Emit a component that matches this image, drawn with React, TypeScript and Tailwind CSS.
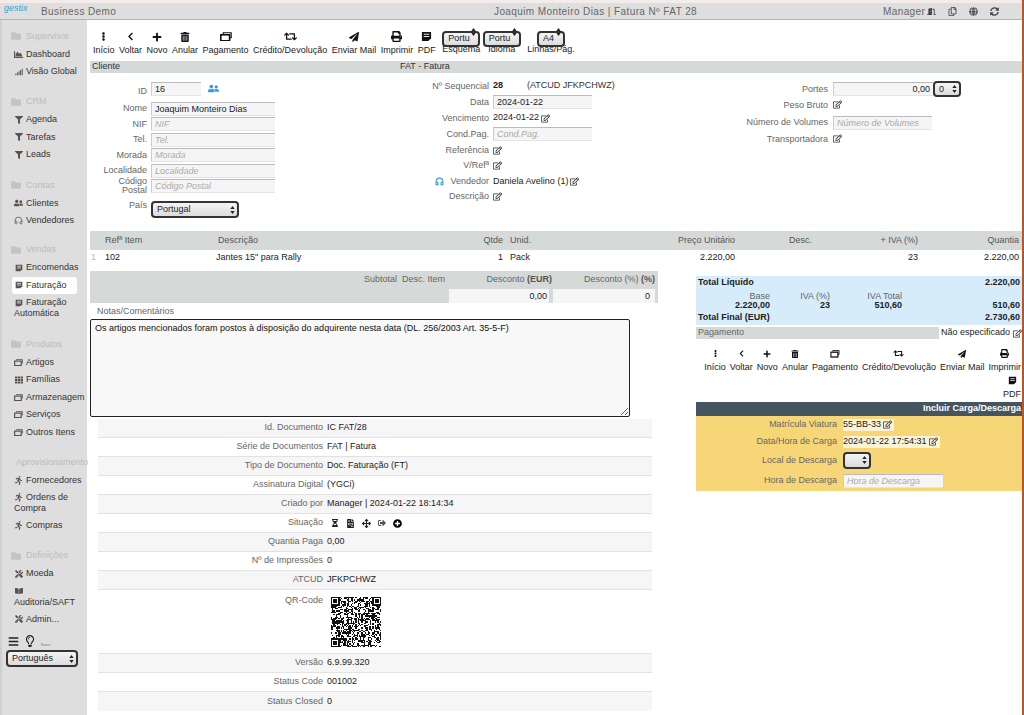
import React from "react";
import {
  FaEllipsisV, FaChevronLeft, FaPlus, FaTrashAlt, FaRetweet, FaPaperPlane, FaPrint, FaFolder, FaFilter, FaUserFriends,
  FaTh, FaRunning, FaTools, FaRegLightbulb, FaHourglassHalf, FaFileInvoice, FaArrowsAlt, FaSignOutAlt, FaPlusCircle,
  FaRegEdit, FaSignal, FaChartArea, FaBars, FaRegCopy, FaGlobe, FaSyncAlt, FaDoorOpen, FaBookOpen,
} from "react-icons/fa";
import { Headphones } from "lucide-react";

const Bills = ({ s = 12 }: { s?: number }) => (
  <svg width={s} height={s * 0.8} viewBox="0 0 15 12" fill="none" stroke="currentColor">
    <path d="M4 2.5V1h10v6h-1.5" strokeWidth="1.4" />
    <rect x="1" y="3.5" width="11" height="7.5" strokeWidth="2" />
  </svg>
);
const Notes = ({ s = 11 }: { s?: number }) => (
  <svg width={s} height={s} viewBox="0 0 12 12" fill="currentColor">
    <path d="M1 1h10v7l-3 3H1z" />
    <path d="M3 3.5h6M3 6h6" stroke="#fff" strokeWidth="1" />
  </svg>
);

const Caret = () => (
  <svg width="5" height="9" viewBox="0 0 5 9" fill="#222" className="absolute right-[4px] top-1/2 -translate-y-1/2 pointer-events-none">
    <path d="M2.5 0.5L4.7 3.6H0.3zM2.5 8.5L0.3 5.4h4.4z" />
  </svg>
);

const Sel = ({ value, cls }: { value: string; cls: string }) => (
  <div className={`relative ${cls}`}>
    <select
      defaultValue={value}
      className="appearance-none w-full h-full rounded-[4px] border-2 border-[#333] bg-gradient-to-b from-[#f4f4f4] to-[#dcdcdc] pl-[4px] text-[9px] leading-none text-[#222] outline-none"
    >
      <option>{value}</option>
    </select>
    <Caret />
  </div>
);

const Tool = ({ icon, label, w }: { icon: React.ReactNode; label: string; w?: string }) => (
  <div className={`flex flex-col items-center ${w ?? ""}`}>
    <div className="h-[13px] flex items-center justify-center text-[#111]">{icon}</div>
    <span className="text-[9px] leading-[13px] mt-px text-[#222] whitespace-nowrap">{label}</span>
  </div>
);

const tools: [React.ReactNode, string][] = [
  [<FaEllipsisV size={9} />, "Início"],
  [<FaChevronLeft size={9} />, "Voltar"],
  [<FaPlus size={10} />, "Novo"],
  [<FaTrashAlt size={10} />, "Anular"],
  [<Bills />, "Pagamento"],
  [<FaRetweet size={13} />, "Crédito/Devolução"],
  [<FaPaperPlane size={10} />, "Enviar Mail"],
  [<FaPrint size={11} />, "Imprimir"],
  [<Notes />, "PDF"],
];

const Item = ({ icon, children, active }: { icon: React.ReactNode; children: React.ReactNode; active?: boolean }) => (
  <div className={`h-[17.5px] leading-[17.5px] flex items-center gap-[3px] pl-[12px] ${active ? "bg-white rounded-[3px] mx-[10px] !pl-[2px]" : ""}`}>
    <span className="w-[9px] flex justify-center text-[#555] shrink-0">{icon}</span>
    <span className="whitespace-nowrap">{children}</span>
  </div>
);
const TwoLine = ({ icon, a, b }: { icon: React.ReactNode; a?: string; b: string }) => (
  <div className="leading-[11px] py-[3px] pl-[12px]">
    <div className="flex items-center gap-[3px] h-[11px]">
      <span className="w-[9px] flex justify-center text-[#555]">{icon}</span>
      {a && <span>{a}</span>}
    </div>
    <div>{b}</div>
  </div>
);
const Head = ({ children, mt }: { children: string; mt: string }) => (
  <div className={`h-[18.5px] flex items-center gap-[5px] pl-[9px] text-[#bcbcbc] whitespace-nowrap ${mt}`}>
    <FaFolder size={10} className="text-[#c4c4c4]" />
    <span>{children}</span>
  </div>
);

const Sidebar = () => (
  <aside className="w-[87px] shrink-0 bg-[#dedede] text-[9px] text-[#333] pt-[7px] border-l-2 border-[#cfcfcf] -ml-0 relative z-10">
    <Head mt="">Supervisor</Head>
    <Item icon={<FaChartArea size={9} />}>Dashboard</Item>
    <Item icon={<FaSignal size={8} />}>Visão Global</Item>
    <Head mt="mt-[12px]">CRM</Head>
    <Item icon={<FaFilter size={8} />}>Agenda</Item>
    <Item icon={<FaFilter size={8} />}>Tarefas</Item>
    <Item icon={<FaFilter size={8} />}>Leads</Item>
    <Head mt="mt-[12.5px]">Contas</Head>
    <Item icon={<FaUserFriends size={10} />}>Clientes</Item>
    <Item icon={<Headphones size={9} />}>Vendedores</Item>
    <Head mt="mt-[11px]">Vendas</Head>
    <Item icon={<Notes s={8} />}>Encomendas</Item>
    <Item active icon={<Notes s={8} />}>Faturação</Item>
    <TwoLine icon={<Notes s={8} />} a="Faturação" b="Automática" />
    <Head mt="mt-[13px]">Produtos</Head>
    <Item icon={<Bills s={9} />}>Artigos</Item>
    <Item icon={<FaTh size={8} />}>Famílias</Item>
    <Item icon={<Bills s={9} />}>Armazenagem</Item>
    <Item icon={<Bills s={9} />}>Serviços</Item>
    <Item icon={<Bills s={9} />}>Outros Itens</Item>
    <Head mt="mt-[12px]">Aprovisionamento</Head>
    <Item icon={<FaRunning size={9} />}>Fornecedores</Item>
    <TwoLine icon={<FaRunning size={9} />} a="Ordens de" b="Compra" />
    <Item icon={<FaRunning size={9} />}>Compras</Item>
    <Head mt="mt-[12px]">Definições</Head>
    <Item icon={<FaTools size={8} />}>Moeda</Item>
    <TwoLine icon={<FaBookOpen size={8} />} b="Auditoria/SAFT" />
    <Item icon={<FaTools size={8} />}>Admin...</Item>
    <div className="h-[18px] mt-[4px] flex items-center gap-[5px] pl-[6px] text-[#222]">
      <FaBars size={11} />
      <FaRegLightbulb size={12} />
      <span className="text-[3px] text-[#777] mt-[8px]">Branco</span>
    </div>
    <Sel value="Português" cls="w-[72px] h-[17px] ml-[4px]" />
  </aside>
);

const inputCls =
  "h-full w-full bg-[#f5f5f5] border-t border-l border-t-[#bbb] border-l-[#ccc] border-b border-b-[#e4e4e4] px-[3px] text-[9px] text-[#222] placeholder:italic placeholder:text-[#aaa] outline-none";

const In = ({ ph, val, cls }: { ph?: string; val?: string; cls: string }) => (
  <div className={cls}>
    <input readOnly placeholder={ph} defaultValue={val} className={inputCls} />
  </div>
);
const Edit = () => <FaRegEdit size={9} className="text-[#333] shrink-0" />;
const EditChip = ({ children }: { children?: React.ReactNode }) => (
  <span className="inline-flex items-center gap-[2px] bg-white/70 h-[12px] pr-[2px] whitespace-nowrap text-[#222]">
    {children}
    <Edit />
  </span>
);

const Row = ({ label, w, h, children, top }: { label: React.ReactNode; w: string; h: string; children?: React.ReactNode; top?: boolean }) => (
  <div className={`flex ${top ? "items-start" : "items-center"} gap-[4px] ${h}`}>
    <div className={`${w} shrink-0 text-right text-[#666] leading-[9px]`}>{label}</div>
    {children}
  </div>
);

const Form = () => (
  <div className="flex h-[158px] text-[9px]">
    <div className="w-[310px] shrink-0 pt-[8px]">
      <Row label="ID" w="w-[57px]" h="h-[20px]">
        <In val="16" cls="w-[50px] h-[14px] -mt-[4px]" />
        <FaUserFriends size={11} className="text-[#3a9bdc] ml-[3px] -mt-[6px]" />
      </Row>
      <Row label="Nome" w="w-[57px]" h="h-[15.5px]"><In val="Joaquim Monteiro Dias" cls="w-[124px] h-[14px]" /></Row>
      <Row label="NIF" w="w-[57px]" h="h-[15.5px]"><In ph="NIF" cls="w-[124px] h-[14px]" /></Row>
      <Row label="Tel." w="w-[57px]" h="h-[15.5px]"><In ph="Tel." cls="w-[124px] h-[14px]" /></Row>
      <Row label="Morada" w="w-[57px]" h="h-[15.5px]"><In ph="Morada" cls="w-[124px] h-[14px]" /></Row>
      <Row label="Localidade" w="w-[57px]" h="h-[15.5px]"><In ph="Localidade" cls="w-[124px] h-[14px]" /></Row>
      <Row label={<>Código<br />Postal</>} w="w-[57px]" h="h-[15.5px]"><In ph="Código Postal" cls="w-[124px] h-[14px]" /></Row>
      <div className="mt-[7px]">
        <Row label="País" w="w-[57px]" h="h-[16px]" top>
          <Sel value="Portugal" cls="w-[88px] h-[17px]" />
        </Row>
      </div>
    </div>
    <div className="w-[330px] shrink-0 pt-[5px]">
      <Row label="Nº Sequencial" w="w-[89px]" h="h-[16px]">
        <b className="text-[#222] w-[30px] -mt-[1px]">28</b>
        <span className="text-[#333] -mt-[1px]">(ATCUD JFKPCHWZ)</span>
      </Row>
      <Row label="Data" w="w-[89px]" h="h-[16px]"><In val="2024-01-22" cls="w-[99px] h-[14px]" /></Row>
      <Row label="Vencimento" w="w-[89px]" h="h-[16px]"><EditChip>2024-01-22</EditChip></Row>
      <Row label="Cond.Pag." w="w-[89px]" h="h-[16px]"><In ph="Cond.Pag." cls="w-[99px] h-[14px]" /></Row>
      <Row label="Referência" w="w-[89px]" h="h-[16px]"><EditChip /></Row>
      <Row label="V/Refª" w="w-[89px]" h="h-[15.5px]"><EditChip /></Row>
      <Row
        label={
          <span className="flex items-center justify-between pl-[35px]">
            <Headphones size={9} className="text-[#3a9bdc]" strokeWidth={3} />
            <span>Vendedor</span>
          </span>
        }
        w="w-[89px]"
        h="h-[15.5px]"
      >
        <EditChip>Daniela Avelino (1)</EditChip>
      </Row>
      <Row label="Descrição" w="w-[89px]" h="h-[15.5px]"><EditChip /></Row>
    </div>
    <div className="flex-1 pt-[8px]">
      <Row label="Portes" w="w-[98px]" h="h-[16px]">
        <div className="flex items-center ml-px">
          <div className="w-[100px] h-[14px]">
            <input readOnly defaultValue="0,00" className={`${inputCls} text-right`} />
          </div>
          <Sel value="0" cls="w-[28px] h-[16px]" />
        </div>
      </Row>
      <Row label="Peso Bruto" w="w-[98px]" h="h-[17px]"><span className="ml-px"><EditChip /></span></Row>
      <Row label="Número de Volumes" w="w-[98px]" h="h-[17px]"><In ph="Número de Volumes" cls="w-[99px] h-[14px] ml-px" /></Row>
      <Row label="Transportadora" w="w-[98px]" h="h-[17px]"><span className="ml-px"><EditChip /></span></Row>
    </div>
  </div>
);

const itemGrid = "grid grid-cols-[15px_111px_247px_40px_147px_85px_130px_53px_101px] items-center text-[9px]";

const Items = () => (
  <div>
    <div className={`${itemGrid} h-[19px] bg-[#d5d9d8] text-[#555]`}>
      <span />
      <span>Refª Item</span>
      <span className="pl-[2px]">Descrição</span>
      <span className="text-right">Qtde</span>
      <span className="pl-[7px]">Unid.</span>
      <span className="text-right">Preço Unitário</span>
      <span className="pl-[54px]">Desc.</span>
      <span className="text-right">+ IVA (%)</span>
      <span className="text-right">Quantia</span>
    </div>
    <div className={`${itemGrid} h-[16px] text-[#222]`}>
      <span className="text-[#bbb] pl-px">1</span>
      <span>102</span>
      <span>Jantes 15" para Rally</span>
      <span className="text-right">1</span>
      <span className="pl-[7px]">Pack</span>
      <span className="text-right">2.220,00</span>
      <span />
      <span className="text-right">23</span>
      <span className="text-right">2.220,00</span>
    </div>
  </div>
);

const Discount = () => (
  <div className="w-[568px] h-[32px] bg-[#d5d9d8] text-[9px] text-[#666] flex justify-end pr-[3px]">
    <div className="flex flex-col">
      <div className="flex h-[18px] items-center">
        <span className="mr-[5px]">Subtotal</span>
        <span className="mr-[29px]">Desc. Item</span>
        <span className="w-[78px] text-right">Desconto <b className="text-[#555]">(EUR)</b></span>
        <span className="w-[103px] text-right">Desconto (%) <b className="text-[#555]">(%)</b></span>
      </div>
      <div className="flex justify-end gap-[4px] h-[14px] text-[#222]">
        <div className="w-[100px] bg-[#f6f6f6] text-right pr-[2px] leading-[14px]">0,00</div>
        <div className="w-[102px] bg-[#f6f6f6] text-right pr-[5px] leading-[14px]">0</div>
      </div>
    </div>
  </div>
);

const qr = (() => {
  const n = 41;
  const cells: [number, number][] = [];
  let seed = 73;
  const finder = (x: number, y: number) => {
    const dx = Math.min(x, n - 1 - x), dy = Math.min(y, n - 1 - y);
    return (dx < 7 && dy < 7 && !(x > 20 && y > 20));
  };
  for (let y = 0; y < n; y++)
    for (let x = 0; x < n; x++) {
      seed = (seed * 1103515245 + 12345) & 0x7fffffff;
      if (finder(x, y)) continue;
      if (((seed >> 16) & 1) === 1) cells.push([x, y]);
    }
  return cells;
})();

const QR = () => (
  <svg width="50" height="50" viewBox="0 0 41 41" shapeRendering="crispEdges">
    {qr.map(([x, y], i) => <rect key={i} x={x} y={y} width="1" height="1" fill="#111" />)}
    {[[0, 0], [34, 0], [0, 34]].map(([x, y], i) => (
      <g key={i}>
        <rect x={x} y={y} width="7" height="7" fill="#111" />
        <rect x={x + 1} y={y + 1} width="5" height="5" fill="#fff" />
        <rect x={x + 2} y={y + 2} width="3" height="3" fill="#111" />
      </g>
    ))}
  </svg>
);

const details: [string, React.ReactNode][] = [
  ["Id. Documento", "IC FAT/28"],
  ["Série de Documentos", "FAT | Fatura"],
  ["Tipo de Documento", "Doc. Faturação (FT)"],
  ["Assinatura Digital", "(YGCi)"],
  ["Criado por", "Manager | 2024-01-22 18:14:34"],
  ["Situação", (
    <span className="flex items-center gap-[7px] pl-[4px] text-[#222]">
      <FaHourglassHalf size={8} />
      <FaFileInvoice size={9} />
      <FaArrowsAlt size={9} />
      <FaSignOutAlt size={8} className="text-[#555]" />
      <FaPlusCircle size={9} className="text-black" />
    </span>
  )],
  ["Quantia Paga", "0,00"],
  ["Nº de Impressões", "0"],
  ["ATCUD", "JFKPCHWZ"],
  ["QR-Code", <div className="pl-[4px] pt-[7px]"><QR /></div>],
  ["Versão", "6.9.99.320"],
  ["Status Code", "001002"],
  ["Status Closed", "0"],
];

const Details = () => (
  <div className="ml-[8px] w-[554px] mt-[2px] text-[9px]">
    {details.map(([k, v], i) => (
      <div
        key={k}
        className={`flex gap-[4px] border-b border-[#e2e2e2] ${k === "QR-Code" ? "h-[64px]" : "h-[19px] items-center"} ${i % 2 === 0 ? "bg-[#f6f6f6]" : "bg-white"} ${i === details.length - 1 ? "border-b-0" : ""}`}
      >
        <div className={`w-[225px] shrink-0 text-right text-[#666] ${k === "QR-Code" ? "pt-[4px]" : ""}`}>{k}</div>
        <div className="text-[#222]">{v}</div>
      </div>
    ))}
  </div>
);

const Left = () => (
  <div className="w-[606px] shrink-0">
    <Discount />
    <div className="text-[9px] text-[#666] pl-[7px] h-[16px] leading-[17px]">Notas/Comentários</div>
    <textarea
      readOnly
      defaultValue="Os artigos mencionados foram postos à disposição do adquirente nesta data (DL. 256/2003 Art. 35-5-F)"
      className="block w-[540px] h-[98px] border border-[#222] rounded-[2px] bg-[#f8f8f8] px-[4px] pt-[3px] text-[9px] leading-[11px] text-[#111] outline-none"
    />
    <Details />
  </div>
);

const Right = () => (
  <div className="w-[326px] shrink-0 pt-[5px] text-[9px]">
    <div className="bg-[#d6ecfb] h-[49px] px-[2px] text-[#222]">
      <div className="flex justify-between font-bold h-[13px] items-center"><span>Total Líquido</span><span>2.220,00</span></div>
      <div className="flex h-[22px] leading-[8.5px] pt-[3px]">
        <div className="w-[72px] text-right"><div className="text-[#666]">Base</div><b>2.220,00</b></div>
        <div className="w-[60px] text-right"><div className="text-[#666]">IVA (%)</div><b>23</b></div>
        <div className="w-[72px] text-right"><div className="text-[#666]">IVA Total</div><b>510,60</b></div>
        <div className="flex-1 text-right pt-[8.5px]"><b>510,60</b></div>
      </div>
      <div className="flex justify-between font-bold h-[14px] items-center"><span>Total Final (EUR)</span><span>2.730,60</span></div>
    </div>
    <div className="mt-[2px] bg-[#d5d9d8] h-[12px] flex justify-between items-center pl-[2px] text-[#666]">
      <span>Pagamento</span>
      <span className="bg-white h-[12px] flex items-center pl-[2px] gap-[3px] text-[#222]">Não especificado <Edit /></span>
    </div>
    <div className="flex flex-wrap justify-end gap-x-[4px] mt-[8px] h-[55px] content-start pr-px">
      {tools.map(([ic, l]) => (
        <Tool key={l} icon={<span className="scale-[.8] block">{ic}</span>} label={l} />
      ))}
    </div>
    <div className="bg-[#455560] text-white font-bold h-[14px] flex items-center justify-end pr-px">Incluir Carga/Descarga</div>
    <div className="bg-[#f7d677] h-[75px] text-[#555]">
      <Row label="Matrícula Viatura" w="w-[141px] pr-0" h="h-[17px]"><span className="ml-[2px]"><EditChip>55-BB-33</EditChip></span></Row>
      <Row label="Data/Hora de Carga" w="w-[141px]" h="h-[17px]"><span className="ml-[2px]"><EditChip>2024-01-22 17:54:31</EditChip></span></Row>
      <Row label="Local de Descarga" w="w-[141px]" h="h-[20px]"><Sel value="" cls="w-[28px] h-[17px] ml-[2px]" /></Row>
      <Row label="Hora de Descarga" w="w-[141px]" h="h-[21px]"><In ph="Hora de Descarga" cls="w-[100px] h-[14px] ml-[2px]" /></Row>
    </div>
  </div>
);

export default function App() {
  return (
    <div className="w-[1024px] h-[715px] overflow-hidden bg-white flex flex-col font-['Liberation_Sans',Arial,sans-serif] relative">
      <div className="h-[3px] shrink-0 bg-[#f3ece8]" />
      <header className="h-[17px] shrink-0 bg-[#dedede] border-b border-[#b5b5b5] flex items-center text-[10px] tracking-[0.4px] text-[#666]">
        <span className="w-[41px] pl-[4px] -mt-[4px] italic text-[9px] tracking-normal text-[#3aa0d8]">gestix</span>
        <span className="w-[453px]">Business Demo</span>
        <span className="w-[389px]">Joaquim Monteiro Dias | Fatura Nº FAT 28</span>
        <span className="w-[44px]">Manager</span>
        <span className="flex items-center gap-[12px] text-[#444]">
          <FaDoorOpen size={9} />
          <FaRegCopy size={9} />
          <FaGlobe size={9} />
          <FaSyncAlt size={9} />
        </span>
      </header>
      <div className="flex flex-1 min-h-0">
        <Sidebar />
        <main className="flex-1 min-w-0 pl-[3px] pr-[2px] relative">
          <div className="h-[41px] flex items-start pt-[4px] pl-[3px] gap-[4.5px]">
            <div className="flex gap-[4.5px] pt-[6px]">
              {tools.map(([ic, l]) => <Tool key={l} icon={ic} label={l} />)}
            </div>
            <div className="flex flex-col items-center ml-[2px]">
              <Sel value="Portu" cls="w-[38px] h-[16px]" />
              <span className="text-[9px] leading-[13px] mt-[3px] text-[#222]">Esquema</span>
            </div>
            <div className="flex flex-col items-center -ml-[2px]">
              <Sel value="Portu" cls="w-[38px] h-[16px]" />
              <span className="text-[9px] leading-[13px] mt-[3px] text-[#222]">Idioma</span>
            </div>
            <div className="flex flex-col items-center ml-[2px]">
              <Sel value="A4" cls="w-[28px] h-[16px]" />
              <span className="text-[9px] leading-[13px] mt-[3px] text-[#222]">Linhas/Pág.</span>
            </div>
          </div>
          <div className="h-[12px] bg-[#d5d9d8] flex items-center text-[9px] text-[#333]">
            <span className="w-[310px] pl-[2px]">Cliente</span>
            <span>FAT - Fatura</span>
          </div>
          <Form />
          <Items />
          <div className="flex mt-[5px]">
            <Left />
            <Right />
          </div>
        </main>
      </div>
      <div className="absolute right-0 top-0 bottom-0 w-[2px] bg-[#b5562b]" />
    </div>
  );
}
